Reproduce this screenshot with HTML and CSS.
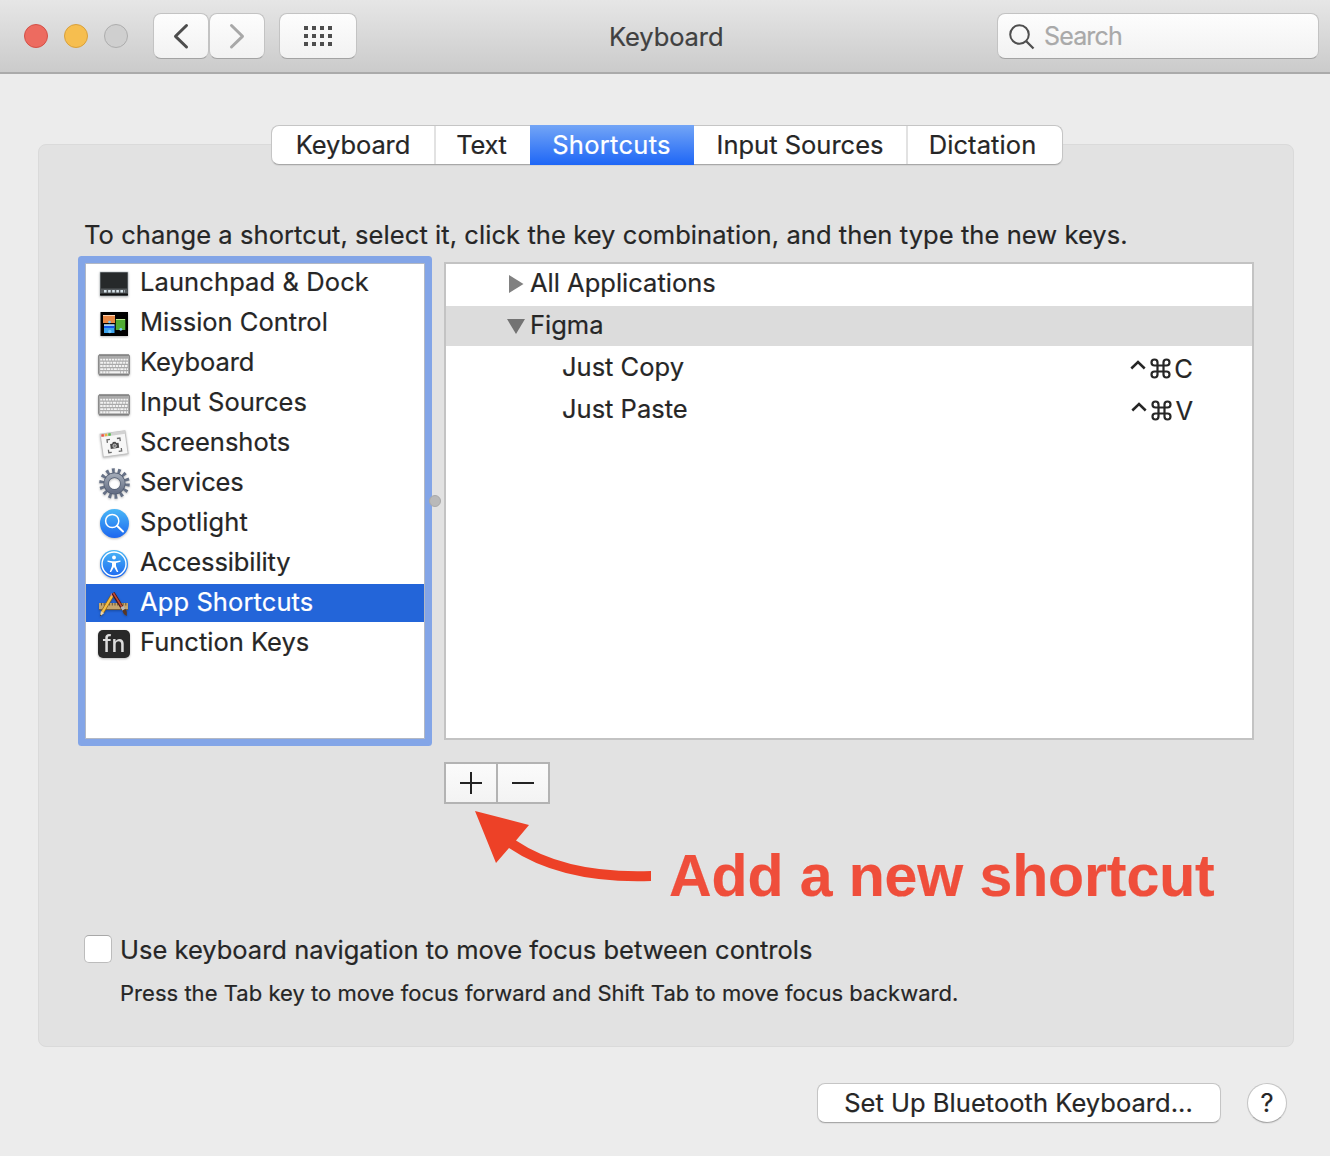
FILE: index.html
```html
<!DOCTYPE html>
<html lang="en">
<head>
<meta charset="utf-8">
<title>Keyboard</title>
<link rel="stylesheet" href="styles.css">
</head>
<body>
<header class="titlebar">
  <div class="lights"><i class="light red"></i><i class="light yellow"></i><i class="light off"></i></div>
  <div class="nav">
    <button class="tool"><svg width="54" height="44" viewBox="0 0 54 44"><path d="M32.500 11.500 21.500 22.300 32.500 33" fill="none" stroke="#4d4d4d" stroke-width="3" stroke-linecap="round" stroke-linejoin="round"/></svg></button>
    <button class="tool"><svg width="54" height="44" viewBox="0 0 54 44"><path d="M21.500 11.500 32.500 22.300 21.500 33" fill="none" stroke="#a8a8a8" stroke-width="3" stroke-linecap="round" stroke-linejoin="round"/></svg></button>
  </div>
  <button class="tool grid"><svg width="28" height="20" viewBox="0 0 28 20"><path d="M0 2H28M0 10H28M0 18H28" stroke="#4d4d4d" stroke-width="4" stroke-dasharray="4 4"/></svg></button>
  <h1 class="title">Keyboard</h1>
  <div class="search"><svg width="28" height="28" viewBox="0 0 28 28" fill="none" stroke="#4f4f4f" stroke-width="2"><circle cx="11.500" cy="11.500" r="9.300"/><path d="M18 18 25.500 25.500" stroke-width="2.300"/></svg><span>Search</span></div>
</header>
<main class="content">
  <nav class="tabs">
    <span class="tab t1">Keyboard</span><span class="tab t2">Text</span><span class="tab t3 active">Shortcuts</span><span class="tab t4">Input Sources</span><span class="tab t5">Dictation</span>
  </nav>
  <section class="panel">
    <p class="intro">To change a shortcut, select it, click the key combination, and then type the new keys.</p>
    <div class="panes">
      <ul class="list">
        <li class="item"><svg class="icon" viewBox="0 0 32 32"><rect x="2" y="5" width="28" height="24" fill="#26292a" stroke="#b9c4c8" stroke-width=".6"/><rect x="3" y="21.500" width="26" height="5" fill="#555a5d"/><path d="M6 24.200H27" stroke="#d7e4eb" stroke-width="2.600" stroke-dasharray="2.600 1.500"/><path d="M2 27.500H30" stroke="#111" stroke-width="1.600"/></svg><span class="loose">Launchpad &amp; Dock</span></li>
        <li class="item"><svg class="icon" viewBox="0 0 32 32"><rect x="2.500" y="5" width="27.500" height="24" fill="#000"/><rect x="5" y="8" width="12" height="8" fill="#e88743"/><path d="M5 8.500H17" stroke="#ffd4b2"/><rect x="6" y="17.500" width="10.500" height="8.500" fill="#3da4ee"/><path d="M6 20H16.500" stroke="#1556e8" stroke-width="2"/><path d="M6 18H16.500" stroke="#fff"/><rect x="17.800" y="12" width="9.500" height="11" fill="#51ad35"/><path d="M18 12.500H27" stroke="#b9e98c"/><g fill="#78c9fa"><circle cx="11.500" cy="15" r="1.300"/><circle cx="11.800" cy="24.500" r="1.700"/><circle cx="22.800" cy="22.300" r="1.400"/></g></svg><span>Mission Control</span></li>
        <li class="item"><svg class="icon" viewBox="0 0 32 32"><use href="#keys"/></svg><span class="tight">Keyboard</span></li>
        <li class="item"><svg class="icon" viewBox="0 0 32 32"><g id="keys"><rect x=".5" y="8" width="31" height="19.500" rx="1" fill="#aaa" stroke="#8b8b8b"/><path d="M1 8H31" stroke="#737373"/><g stroke="#f2f2f2" stroke-width="1.900"><path d="M2.200 12.600H30" stroke-dasharray="2.200 .7"/><path d="M2.200 15.800H30" stroke-dasharray="3 .7 2 .7"/><path d="M2.200 19H30" stroke-dasharray="2.400 .7"/><path d="M2.200 22.100H30" stroke-dasharray="3.300 .7 2 .7"/><path d="M2.200 25.200H30" stroke-dasharray="2.300 .7 2.300 .7 2.300 .7 11 .7 2.300 .7 2.300 .7"/></g><path d="M1 28H31" stroke="#777"/></g></svg><span>Input Sources</span></li>
        <li class="item"><svg class="icon" viewBox="0 0 32 32"><g transform="translate(-.5 -1) rotate(-8 16 17)"><rect x="4" y="6.500" width="25" height="23" fill="#f7f7f7" stroke="#c2c2c2"/><path d="M4 8H29" stroke="#d2d2d2" stroke-width="3"/><path d="M5 8H7.500" stroke="#ee5145" stroke-width="2.500"/><path d="M8.500 8H11" stroke="#eeb13e" stroke-width="2.500"/><path d="M12 8H14.500" stroke="#58bd50" stroke-width="2.500"/><path d="M10 16V13H13M20 13H23V16M23 23V26H20M13 26H10V23" fill="none" stroke="#696969" stroke-width="1.300"/><path d="M12.500 17.500H14.500L15.500 16H18L19 17.500H21V22.500H12.500Z" fill="#4b4b4b"/><circle cx="16.700" cy="20" r="1.700" fill="#777" stroke="#ddd" stroke-width=".7"/></g></svg><span>Screenshots</span></li>
        <li class="item"><svg class="icon" viewBox="0 0 32 32"><defs><linearGradient id="steel" x1="0" y1="0" x2="0" y2="1"><stop stop-color="#a0a8b5"/><stop offset="1" stop-color="#667086"/></linearGradient></defs><circle cx="16.500" cy="16.500" r="12.600" fill="none" stroke="#667186" stroke-width="5.400" stroke-dasharray="2.700 2.955"/><circle cx="16.500" cy="16.500" r="8.300" fill="none" stroke="#525d72" stroke-width="5.400"/><circle cx="16.500" cy="16.500" r="8.300" fill="none" stroke="url(#steel)" stroke-width="4"/></svg><span class="tight">Services</span></li>
        <li class="item"><svg class="icon" viewBox="0 0 32 32"><defs><linearGradient id="blue" x1="0" y1="0" x2="0" y2="1"><stop stop-color="#49b7f7"/><stop offset="1" stop-color="#1c66ef"/></linearGradient></defs><circle cx="16.500" cy="16.500" r="14.500" fill="url(#blue)"/><circle cx="14.200" cy="14" r="6.600" fill="none" stroke="#fff" stroke-width="1.500"/><path d="M19 18.800 25 24.500" stroke="#fff" stroke-width="2" stroke-linecap="round"/></svg><span class="loose">Spotlight</span></li>
        <li class="item"><svg class="icon" viewBox="0 0 32 32"><circle cx="16" cy="17" r="14" fill="url(#blue)"/><circle cx="16" cy="17" r="12" fill="none" stroke="#fff" stroke-width="1.400"/><circle cx="16" cy="10.500" r="1.900" fill="#fff"/><path d="M9.500 13.500 14.500 14.300H17.500L22.500 13.500V14.700L18 15.900V19L20.300 25H18.900L16 20 13.100 25H11.700L14 19V15.900L9.500 14.700Z" fill="#fff"/></svg><span class="tight">Accessibility</span></li>
        <li class="item selected"><svg class="icon" viewBox="0 0 32 32"><path d="M1 16H30V23H1Z" fill="#c5a66e"/><path d="M3 17.300H29" stroke="#685432" stroke-width="2.600" stroke-dasharray="1 1.700"/><path d="M1 22.500H30" stroke="#765f3b"/><path d="M14 9 4.500 25" stroke="#8a6220" stroke-width="3.600"/><path d="M14 9 4.500 25" stroke="#f7c043" stroke-width="2.400"/><path d="M15 7 13.800 9" stroke="#e98d99" stroke-width="3.200"/><path d="M2.900 24.100 2 29.500 6.200 26Z" fill="#f1d4a0"/><path d="M2 29.500 2.300 27.500 3.600 28.200Z" fill="#222"/><path d="M15 6 25 22" stroke="#441512" stroke-width="3.400"/><path d="M15.300 6 24 20" stroke="#c34a34" stroke-width="1.600"/><path d="M22.500 20.500 25.500 18.700 27.500 22 24.500 23.800Z" fill="#b8b8b8"/><path d="M24.500 23.500 27.500 21.700Q29.500 24.500 28.800 29 25 27 24.500 23.500" fill="#593723"/></svg><span class="loose">App Shortcuts</span></li>
        <li class="item"><svg class="icon" viewBox="0 0 32 32"><rect y="3" width="32" height="28" rx="5" fill="#292929"/><text x="16" y="25" text-anchor="middle" class="fn">fn</text></svg><span>Function Keys</span></li>
      </ul>
      <div class="splitter"><i></i></div>
      <div class="table">
        <div class="row"><svg width="18" height="20" viewBox="0 0 18 20"><path d="M2 1V19L16.500 10Z" fill="#818181"/></svg><span>All Applications</span></div>
        <div class="row group"><svg width="18" height="20" viewBox="0 0 18 20"><path d="M0 3H18L9 18Z" fill="#737373"/></svg><span>Figma</span></div>
        <div class="row child"><span class="name">Just Copy</span><span class="combo"><svg width="16" height="20" viewBox="0 0 16 20"><path d="M1.300 10.500 8 4 14.700 10.500" fill="none" stroke="#262626" stroke-width="2.500"/></svg><svg class="cmd" width="21" height="21" viewBox="0 0 21 21"><use href="#command"/></svg><span>C</span></span></div>
        <div class="row child"><span class="name">Just Paste</span><span class="combo"><svg width="16" height="20" viewBox="0 0 16 20"><path d="M1.300 10.500 8 4 14.700 10.500" fill="none" stroke="#262626" stroke-width="2.500"/></svg><svg class="cmd" width="21" height="21" viewBox="0 0 21 21"><path id="command" d="M7.500 7.500V4.500A3 3 0 1 0 4.500 7.500H16.500A3 3 0 1 0 13.500 4.500V16.500A3 3 0 1 0 16.500 13.500H4.500A3 3 0 1 0 7.500 16.500Z" fill="none" stroke="#262626" stroke-width="2.200"/></svg><span>V</span></span></div>
      </div>
    </div>
    <div class="actions">
      <div class="edit"><button><svg width="22" height="22" viewBox="0 0 22 22"><path d="M0 11H22M11 0V22" stroke="#222" stroke-width="2"/></svg></button><button><svg width="22" height="22" viewBox="0 0 22 22"><path d="M0 11H22" stroke="#222" stroke-width="2"/></svg></button></div>
      <div class="note"><svg width="180" height="76" viewBox="0 0 180 76"><path d="M0 0 54 14 41 29.500Q91 63 176 60V70Q87 73 34 37L21 52Z" fill="#ed4127"/></svg><strong>Add a new shortcut</strong></div>
    </div>
    <label class="check"><i></i><span>Use keyboard navigation to move focus between controls</span></label>
    <p class="hint">Press the Tab key to move focus forward and Shift Tab to move focus backward.</p>
  </section>
  <footer class="footer"><button class="setup"><span>Set Up Bluetooth Keyboard...</span></button><button class="help">?</button></footer>
</main>
</body>
</html>
```
FILE: styles.css
```css
* { box-sizing: border-box; }
body { margin: 0; width: 1330px; height: 1156px; background: #ececec; color: #262626; font: 25.5px/38px Inter, "Liberation Sans", sans-serif; white-space: nowrap; overflow: hidden; -webkit-text-stroke: .2px; }
button { font: inherit; color: inherit; padding: 0; margin: 0; border: 0; display: flex; align-items: center; justify-content: center; }
p, ul, h1 { margin: 0; padding: 0; }
svg { display: block; flex: none; overflow: visible; }
.titlebar { height: 74px; display: flex; align-items: flex-start; padding: 13px 11px 0 24px; background: linear-gradient(#e6e6e6, #cbcbcb); border-bottom: 2px solid #aaa; }
.lights { display: flex; gap: 16px; padding-top: 11px; width: 129px; }
.light { width: 24px; height: 24px; border-radius: 50%; border: 1px solid; }
.red { background: #ed6b60; border-color: #d35047; }
.yellow { background: #f6be4f; border-color: #d8a03c; }
.off { background: #cfcfcf; border-color: #adadad; }
.nav { display: flex; }
.tool { width: 56px; height: 46px; border: 1px solid #c3c3c3; border-bottom-color: #a3a3a3; border-radius: 8px; background: linear-gradient(#fdfdfd, #f2f2f2); }
.grid { width: 78px; margin-left: 14px; }
.title { flex: 1; margin-left: 252px; padding-top: 5px; font-size: 25.5px; font-weight: 400; letter-spacing: -.1px; color: #404040; }
.search { width: 322px; height: 46px; display: flex; align-items: center; border: 1px solid #c3c3c3; border-bottom-color: #a3a3a3; border-radius: 8px; background: linear-gradient(#fdfdfd, #f2f2f2); padding-left: 10px; color: #a9a9a9; }
.search svg { margin-top: 2px; }
.search span { margin: -1px 0 0 8px; font-size: 25px; letter-spacing: -.85px; }
.content { padding: 51px 36px 0 38px; }
.tabs { position: relative; z-index: 1; width: 792px; height: 40px; margin-left: 233px; display: flex; background: #fff; border: 1px solid #c5c5c5; border-bottom-color: #a8a8a8; border-radius: 8px; box-shadow: 0 1px 1px #0001; }
.tab { text-align: center; border-right: 2px solid #e2e2e2; }
.t1 { width: 164px; letter-spacing: -.1px; }
.t2 { width: 94px; border: 0; padding-right: 3px; letter-spacing: -.3px; }
.t3 { width: 164px; letter-spacing: .3px; }
.t4 { width: 214px; }
.t5 { flex: 1; border: 0; padding-right: 5px; letter-spacing: .1px; }
.active { margin: -1px 0; line-height: 40px; color: #fff; border: 0; padding-right: 1px; background: linear-gradient(#73a5f6, #1e66f6); }
.panel { margin-top: -21px; height: 903px; padding: 71px 39px 0 45px; border: 1px solid #dadada; border-radius: 8px; background: #e2e2e2; }
.intro { height: 46px; letter-spacing: .07px; }
.panes { display: flex; height: 478px; margin-left: 1px; }
.list { width: 340px; height: 476px; margin-top: 1px; border: 1px solid #b2b8c4; background: #fff; box-shadow: 0 0 0 7px #83a5e7; border-radius: 1px; list-style: none; display: flex; flex-direction: column; gap: 2px; }
.item { height: 38px; padding-left: 12px; display: flex; line-height: 35px; }
.icon { width: 32px; height: 32px; margin: 3px 10px 0 0; filter: drop-shadow(0 1px 1px #0004); }
.tight { letter-spacing: -.12px; }
.loose { letter-spacing: .1px; }
.selected { background: #2365d9; color: #fff; }
.fn { font: 500 23px Inter, sans-serif; fill: #ddd; }
.splitter { width: 19px; display: flex; align-items: center; justify-content: center; z-index: 1; }
.splitter i { flex: none; width: 12px; height: 12px; border-radius: 50%; background: #b9b9b9; border: 1px solid #a9a9a9; }
.table { width: 810px; border: 2px solid #c3c3c3; background: #fff; }
.row { height: 40px; margin-bottom: 2px; padding-left: 61px; display: flex; align-items: center; gap: 5px; }
.row:first-child { height: 42px; margin: 0; padding-bottom: 3px; }
.row:first-child span { margin-top: -2px; }
.group span { margin-top: -3px; }
.group { background: #dcdcdc; }
.child { padding: 0 59px 0 116px; justify-content: space-between; }
.name { margin-top: -2px; }
.combo { display: flex; align-items: center; margin-top: -1px; }
.cmd { margin: 2px 3px 0 4px; }
.combo span { margin-top: 2px; }
.actions { display: flex; height: 194px; padding: 22px 0 0 360px; }
.edit { display: flex; width: 106px; height: 42px; border: 2px solid #b3b3b3; background: #b3b3b3; gap: 2px; }
.edit button { width: 50px; height: 38px; background: linear-gradient(#fbfbfb, #f3f3f3); }
.note { display: flex; width: 750px; margin: 49px 0 0 -75px; color: #ef4e3b; }
.note strong { font: bold 59px/76px "Liberation Sans", sans-serif; letter-spacing: -.1px; margin: 27px 0 0 14px; height: 76px; }
.check { display: flex; height: 30px; align-items: center; }
.check i { width: 28px; height: 28px; margin-right: 8px; background: #fff; border: 1px solid #bcbcbc; border-top-color: #a8a8a8; border-radius: 5px; }
.check span { padding-top: 2px; }
.hint { padding: 10px 0 0 36px; font-size: 22px; letter-spacing: .03px; }
.footer { display: flex; gap: 26px; justify-content: flex-end; padding: 36px 7px 0 0; }
.setup, .help { height: 40px; background: #fff; border: 1px solid #c5c5c5; border-bottom-color: #a8a8a8; box-shadow: 0 1px 1px #0001; }
.setup { width: 404px; border-radius: 8px; letter-spacing: .03px; padding-right: 1px; }
.help { width: 40px; border-radius: 50%; }
```
